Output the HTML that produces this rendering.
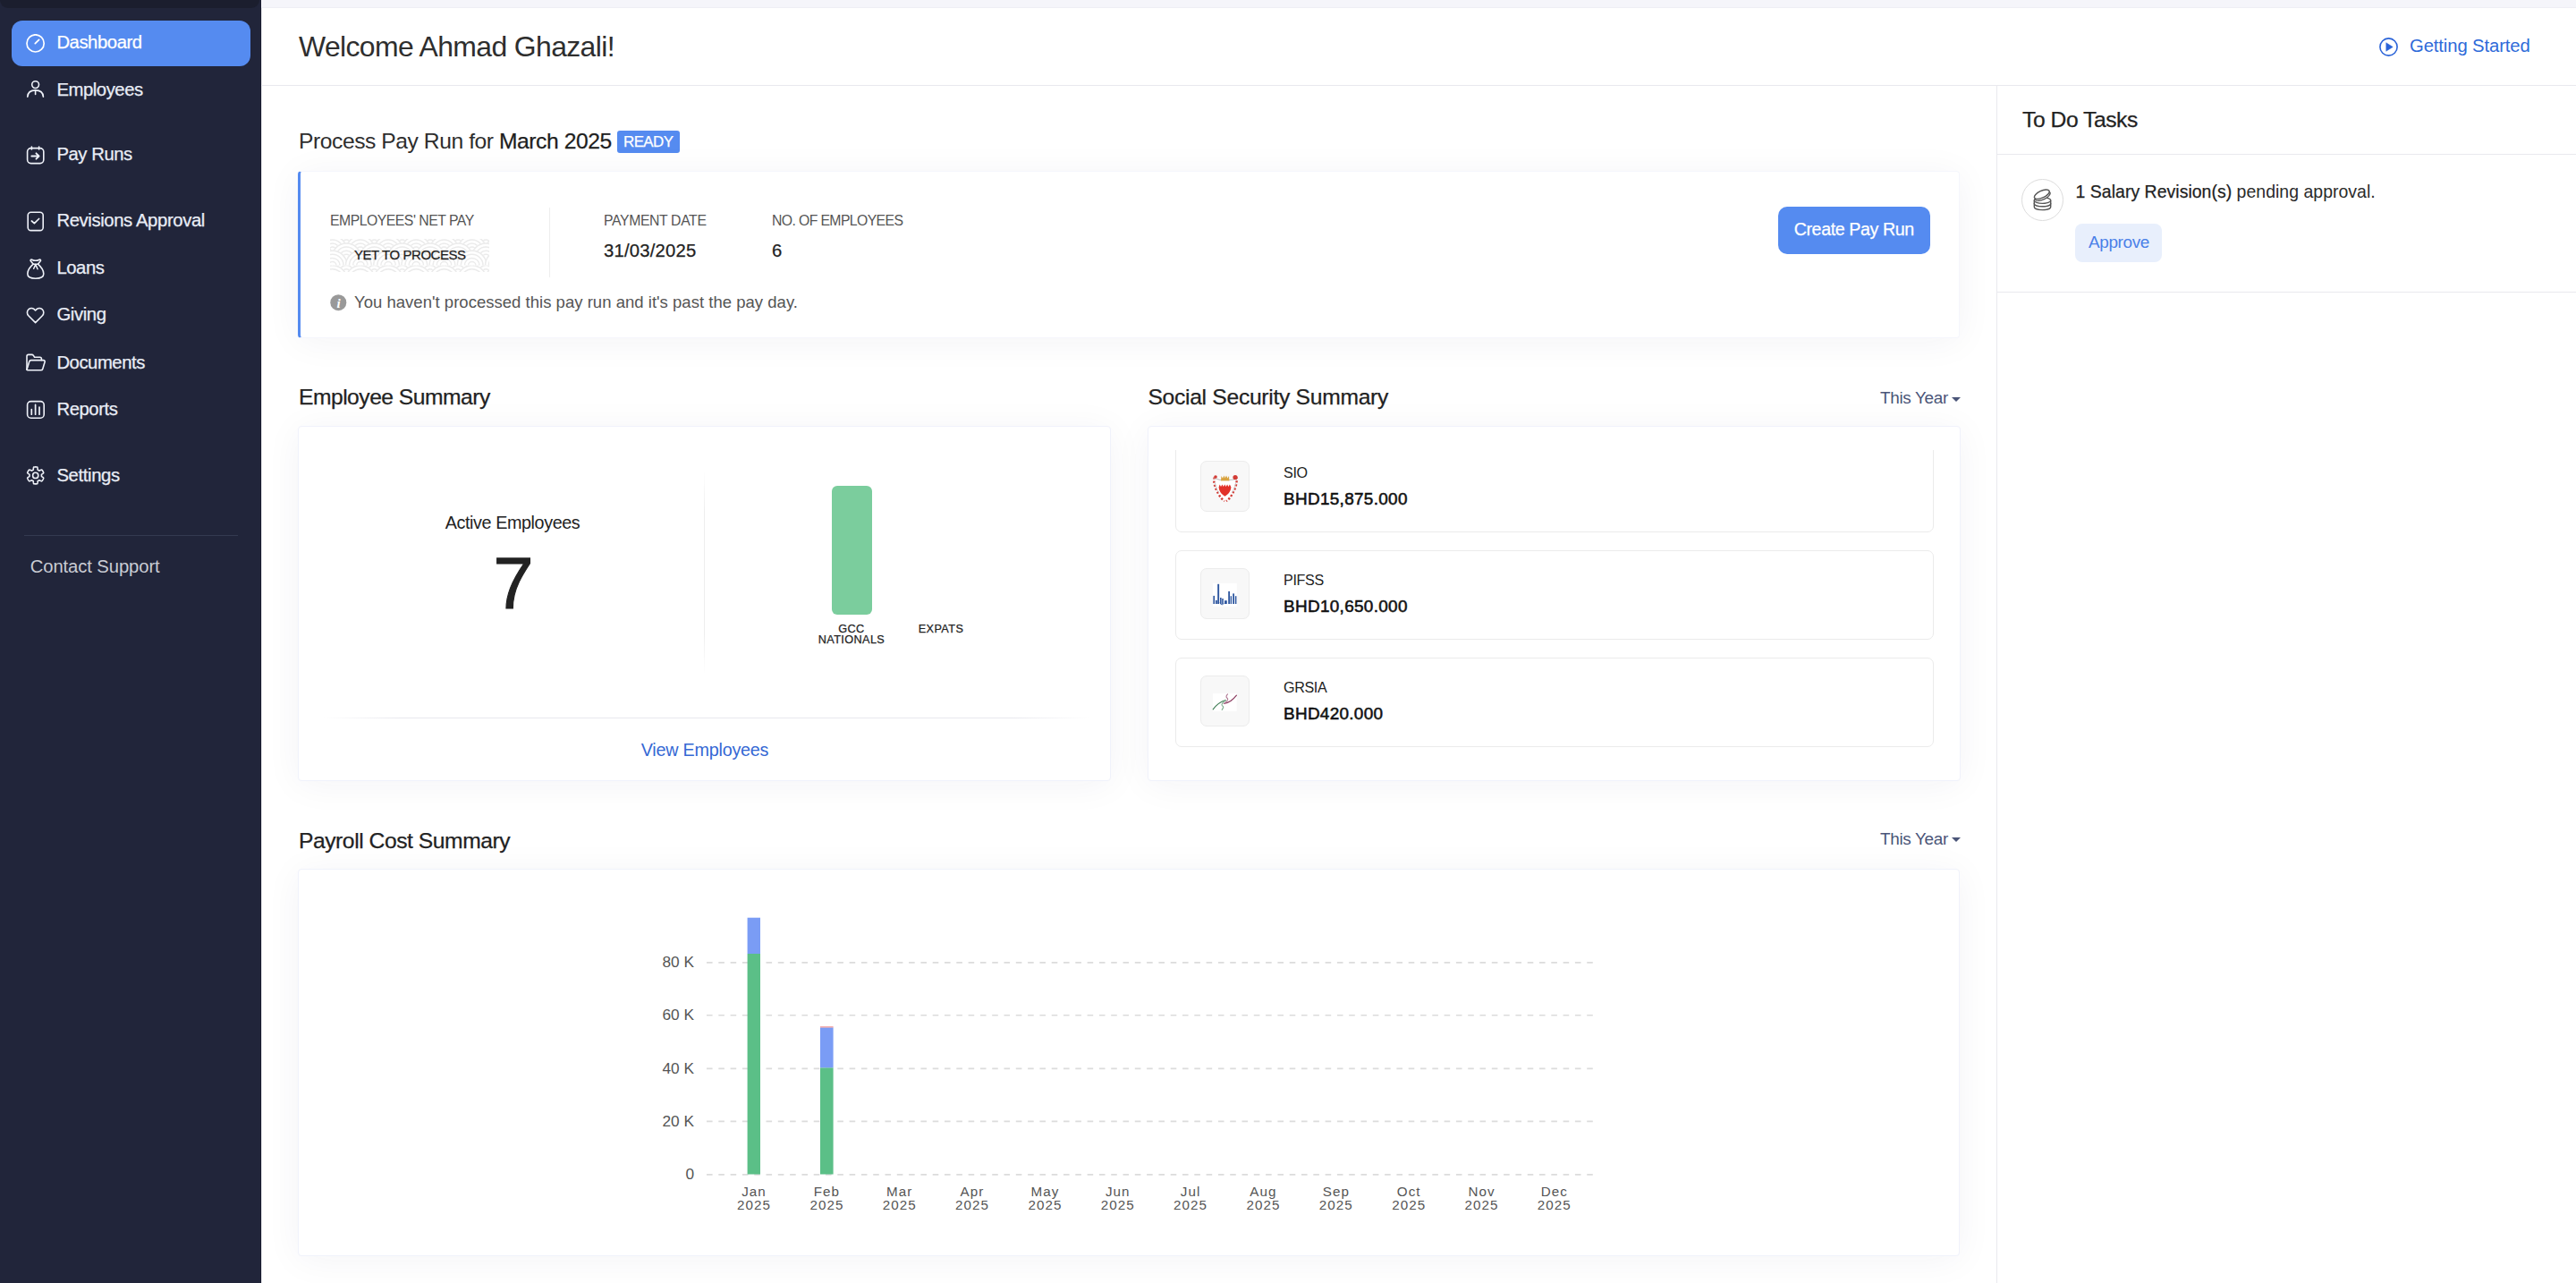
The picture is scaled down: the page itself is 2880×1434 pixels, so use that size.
<!DOCTYPE html>
<html><head><meta charset="utf-8"><title>Dashboard</title>
<style>
html,body{margin:0;padding:0;width:2880px;height:1434px;overflow:hidden;background:#fff;}
body{position:relative;font-family:"Liberation Sans",sans-serif;}
.a{position:absolute;}
.t{position:absolute;line-height:1;white-space:nowrap;}
.med{-webkit-text-stroke:0.25px currentColor;}
.semi{-webkit-text-stroke:0.55px currentColor;}
.bold{font-weight:700;}
</style></head><body>
<div class="a" style="left:0px;top:0px;width:292px;height:1434px;background:#21253a;"></div>
<div class="a" style="left:291px;top:0px;width:1px;height:1434px;background:#181b2e;"></div>
<div class="a" style="left:292px;top:0px;width:1px;height:1434px;background:#e4e4e8;"></div>
<div class="a" style="left:0px;top:0px;width:290px;height:9px;background:#1b1e2e;border-radius:0 0 9px 9px;"></div>
<div class="a" style="left:13px;top:23px;width:267px;height:51px;background:#558bf0;border-radius:12px;"></div>
<svg class="a" style="left:29px;top:38px" width="22" height="22" viewBox="0 0 22 22" fill="none" stroke="#ffffff" stroke-linecap="round" stroke-linejoin="round"><circle cx="10.6" cy="10.4" r="9.6" stroke-width="1.7"/><path d="M10.3 10.6 L14.6 6.4" stroke-width="1.8"/></svg>
<div class="t med" style="left:63.4px;top:37.4px;font-size:20.28px;color:#fff;letter-spacing:-0.435px">Dashboard</div>
<svg class="a" style="left:29px;top:88px" width="22" height="22" viewBox="0 0 22 22" fill="none" stroke="#eef1f8" stroke-linecap="round" stroke-linejoin="round"><circle cx="10.6" cy="6.6" r="3.9" stroke-width="1.6"/><path d="M1.8 20.2 C2 15.5 5.5 12.9 10.6 12.9 C15.7 12.9 19.2 15.5 19.4 20.2" stroke-width="1.6"/><path d="M10.6 13 V17.5" stroke-width="1.6"/></svg>
<div class="t med" style="left:63.4px;top:89.6px;font-size:20.28px;color:#e9edf6;letter-spacing:-0.440px">Employees</div>
<svg class="a" style="left:29px;top:162px" width="22" height="23" viewBox="0 0 22 23" fill="none" stroke="#eef1f8" stroke-linecap="round" stroke-linejoin="round"><rect x="1.6" y="3.6" width="18.2" height="17" rx="4" stroke-width="1.6"/><path d="M6.4 2 V5 M14.6 2 V5" stroke-width="1.6"/><path d="M6.3 12.5 H14.5 M11.4 9.3 L14.6 12.5 L11.4 15.7" stroke-width="1.8"/></svg>
<div class="t med" style="left:63.4px;top:162.4px;font-size:20.28px;color:#e9edf6;letter-spacing:-0.434px">Pay Runs</div>
<svg class="a" style="left:29px;top:235px" width="22" height="24" viewBox="0 0 22 24" fill="none" stroke="#eef1f8" stroke-linecap="round" stroke-linejoin="round"><rect x="2.2" y="2.2" width="17" height="20.4" rx="3.4" stroke-width="1.6"/><path d="M6.4 12 L9.4 14.6 L14.6 9.5" stroke-width="1.7"/></svg>
<div class="t med" style="left:63.4px;top:236.0px;font-size:20.28px;color:#e9edf6;letter-spacing:-0.378px">Revisions Approval</div>
<svg class="a" style="left:29px;top:288px" width="22" height="25" viewBox="0 0 22 25" fill="none" stroke="#eef1f8" stroke-linecap="round" stroke-linejoin="round"><path d="M8.2 7.2 C5 10 1.8 14 1.8 18 C1.8 21.5 5.5 23.2 10.8 23.2 C16.1 23.2 19.8 21.5 19.8 18 C19.8 14 16.6 10 13.4 7.2" stroke-width="1.6"/><path d="M8.2 7.2 L5.2 3.6 C4.8 2.6 5.6 1.8 6.6 2.2 C8 2.9 9.5 3.3 10.8 3.3 C12.1 3.3 13.6 2.9 15 2.2 C16 1.8 16.8 2.6 16.4 3.6 L13.4 7.2 Z" stroke-width="1.6"/><path d="M10.8 7.6 L8.7 12.2 M10.8 7.6 L13 12.8" stroke-width="1.5"/></svg>
<div class="t med" style="left:63.4px;top:289.4px;font-size:20.28px;color:#e9edf6;letter-spacing:-0.436px">Loans</div>
<svg class="a" style="left:29px;top:343px" width="22" height="20" viewBox="0 0 22 20" fill="none" stroke="#eef1f8" stroke-linecap="round" stroke-linejoin="round"><path d="M10.6 17.6 L3 10 C0.8 7.8 0.9 4.5 3.1 2.6 C5.2 0.9 8.3 1.2 10.6 4 C12.9 1.2 16 0.9 18.1 2.6 C20.3 4.5 20.4 7.8 18.2 10 Z" stroke-width="1.6"/></svg>
<div class="t med" style="left:63.4px;top:341.3px;font-size:20.28px;color:#e9edf6;letter-spacing:-0.378px">Giving</div>
<svg class="a" style="left:28px;top:394px" width="24" height="22" viewBox="0 0 24 22" fill="none" stroke="#eef1f8" stroke-linecap="round" stroke-linejoin="round"><path d="M2 19.2 V4.2 C2 3 2.8 2.4 3.8 2.4 H7.6 C8.4 2.4 9 2.8 9.4 3.4 L10.6 5.2 H16.6 C17.6 5.2 18.4 6 18.4 7 V8.6" stroke-width="1.6"/><path d="M2 19.2 L4.6 10.4 C4.9 9.4 5.6 8.6 6.8 8.6 H20.6 C21.8 8.6 22.4 9.6 22.1 10.6 L19.8 18.2 C19.5 19.2 18.8 19.8 17.8 19.8 H2.6" stroke-width="1.6"/></svg>
<div class="t med" style="left:63.4px;top:394.6px;font-size:20.28px;color:#e9edf6;letter-spacing:-0.450px">Documents</div>
<svg class="a" style="left:29px;top:447px" width="22" height="22" viewBox="0 0 22 22" fill="none" stroke="#eef1f8" stroke-linecap="round" stroke-linejoin="round"><rect x="1.6" y="1.6" width="18.6" height="18.6" rx="4" stroke-width="1.6"/><path d="M6.3 10.6 V16.2 M10.6 5.4 V16.2 M15 8 V16.2" stroke-width="1.7"/></svg>
<div class="t med" style="left:63.4px;top:446.8px;font-size:20.28px;color:#e9edf6;letter-spacing:-0.400px">Reports</div>
<svg class="a" style="left:28px;top:520px" width="24" height="24" viewBox="0 0 24 24" fill="none" stroke="#eef1f8" stroke-linecap="round" stroke-linejoin="round"><path d="M18.40 11.40 L18.39 11.69 L18.37 11.98 L18.34 12.27 L18.71 12.64 L19.44 13.12 L20.20 13.68 L20.76 14.26 L20.63 14.65 L20.48 15.04 L20.31 15.41 L20.13 15.79 L19.93 16.15 L19.71 16.50 L19.48 16.85 L19.24 17.18 L18.98 17.51 L18.70 17.82 L17.92 17.62 L17.06 17.25 L16.28 16.85 L15.78 16.72 L15.54 16.89 L15.30 17.05 L15.05 17.20 L14.79 17.34 L14.53 17.47 L14.26 17.59 L14.14 18.09 L14.08 18.96 L13.98 19.90 L13.76 20.67 L13.35 20.76 L12.94 20.82 L12.53 20.86 L12.11 20.89 L11.70 20.90 L11.29 20.89 L10.87 20.86 L10.46 20.82 L10.05 20.76 L9.64 20.67 L9.42 19.90 L9.32 18.96 L9.26 18.09 L9.14 17.59 L8.87 17.47 L8.61 17.34 L8.35 17.20 L8.10 17.05 L7.86 16.89 L7.62 16.72 L7.12 16.85 L6.34 17.25 L5.48 17.62 L4.70 17.82 L4.42 17.51 L4.16 17.18 L3.92 16.85 L3.69 16.50 L3.47 16.15 L3.27 15.79 L3.09 15.41 L2.92 15.04 L2.77 14.65 L2.64 14.26 L3.20 13.68 L3.96 13.12 L4.69 12.64 L5.06 12.27 L5.03 11.98 L5.01 11.69 L5.00 11.40 L5.01 11.11 L5.03 10.82 L5.06 10.53 L4.69 10.16 L3.96 9.68 L3.20 9.12 L2.64 8.54 L2.77 8.15 L2.92 7.76 L3.09 7.39 L3.27 7.01 L3.47 6.65 L3.69 6.30 L3.92 5.95 L4.16 5.62 L4.42 5.29 L4.70 4.98 L5.48 5.18 L6.34 5.55 L7.12 5.95 L7.62 6.08 L7.86 5.91 L8.10 5.75 L8.35 5.60 L8.61 5.46 L8.87 5.33 L9.14 5.21 L9.26 4.71 L9.32 3.84 L9.42 2.90 L9.64 2.13 L10.05 2.04 L10.46 1.98 L10.87 1.94 L11.29 1.91 L11.70 1.90 L12.11 1.91 L12.53 1.94 L12.94 1.98 L13.35 2.04 L13.76 2.13 L13.98 2.90 L14.08 3.84 L14.14 4.71 L14.26 5.21 L14.53 5.33 L14.79 5.46 L15.05 5.60 L15.30 5.75 L15.54 5.91 L15.78 6.08 L16.28 5.95 L17.06 5.55 L17.92 5.18 L18.70 4.98 L18.98 5.29 L19.24 5.62 L19.48 5.95 L19.71 6.30 L19.93 6.65 L20.13 7.01 L20.31 7.39 L20.48 7.76 L20.63 8.15 L20.76 8.54 L20.20 9.12 L19.44 9.68 L18.71 10.16 L18.34 10.53 L18.37 10.82 L18.39 11.11 Z" stroke-width="1.6"/><circle cx="11.7" cy="11.4" r="3.1" stroke-width="1.6"/></svg>
<div class="t med" style="left:63.4px;top:520.6px;font-size:20.28px;color:#e9edf6;letter-spacing:-0.362px">Settings</div>
<div class="a" style="left:27px;top:598px;width:239px;height:1px;background:#343a50;"></div>
<div class="t " style="left:33.7px;top:623.4px;font-size:20.28px;color:#c9ccd4;letter-spacing:-0.106px">Contact Support</div>
<div class="a" style="left:292px;top:0px;width:2588px;height:8px;background:#f5f5fa;"></div>
<div class="a" style="left:292px;top:8px;width:2588px;height:1px;background:#eeeef4;"></div>
<div class="t " style="left:334.0px;top:37.2px;font-size:31.93px;color:#2e2e2e;letter-spacing:-0.626px">Welcome Ahmad Ghazali!</div>
<svg class="a" style="left:2659px;top:41px" width="23" height="23" viewBox="0 0 23 23" fill="none" stroke="#2a63d8" stroke-linecap="round" stroke-linejoin="round"><circle cx="11.5" cy="11.5" r="9.6" stroke-width="1.6"/><path d="M9 7 L16.2 11.5 L9 16 Z" fill="#2a63d8" stroke-width="0.6"/></svg>
<div class="t " style="left:2694.0px;top:41.4px;font-size:20.28px;color:#2e6ad9;letter-spacing:-0.109px">Getting Started</div>
<div class="a" style="left:292px;top:95px;width:2588px;height:1px;background:#e9e9ee;"></div>
<div class="a" style="left:2232px;top:96px;width:1px;height:1338px;background:#e9e9ee;"></div>
<div class="t med" style="left:2261.0px;top:122.4px;font-size:24.65px;color:#222;letter-spacing:-0.444px">To Do Tasks</div>
<div class="a" style="left:2233px;top:172px;width:647px;height:1px;background:#e9e9ee;"></div>
<div class="a" style="left:2260px;top:200px;width:47px;height:47px;border:1.3px solid #dcdcdc;border-radius:50%;box-sizing:border-box;"></div>
<svg class="a" style="left:2268px;top:206px" width="30" height="32" viewBox="0 0 30 32" fill="none" stroke="#555" stroke-linecap="round" stroke-linejoin="round"><ellipse cx="15.5" cy="18" rx="9.2" ry="3.4" stroke-width="1.4"/><path d="M6.3 18 V25.3 C6.3 27.2 10.4 28.6 15.5 28.6 C20.6 28.6 24.7 27.2 24.7 25.3 V18" stroke-width="1.4"/><path d="M6.3 21.5 C6.3 23.4 10.4 24.8 15.5 24.8 C20.6 24.8 24.7 23.4 24.7 21.5" stroke-width="1.4"/><g transform="rotate(-25 14.8 11.2)"><ellipse cx="14.8" cy="13.3" rx="9.1" ry="3.9" fill="#fff" stroke-width="1.4"/><ellipse cx="14.8" cy="11.2" rx="9.1" ry="3.9" fill="#fff" stroke-width="1.4"/></g></svg>
<div class="t " style="left:2320.6px;top:204.8px;font-size:19.45px;color:#2b2b2b;letter-spacing:0.034px"><span class="med" style="color:#1f1f1f">1 Salary Revision(s)</span> pending approval.</div>
<div class="a" style="left:2320px;top:250px;width:97px;height:43px;background:#e8effc;border-radius:8px;"></div>
<div class="t " style="left:2335.0px;top:261.5px;font-size:18.93px;color:#4a80e8;letter-spacing:-0.372px">Approve</div>
<div class="a" style="left:2233px;top:326px;width:647px;height:1px;background:#e9e9ee;"></div>
<div class="t " style="left:334.0px;top:145.6px;font-size:24.65px;color:#2e2e2e;letter-spacing:-0.442px">Process Pay Run for <span class="med" style="color:#1e1e1e">March 2025</span></div>
<div class="a" style="left:690px;top:146px;width:70px;height:25px;background:#558bf0;border-radius:3px;"></div>
<div class="t med" style="left:697.0px;top:151.0px;font-size:16.95px;color:#fff;letter-spacing:-0.582px">READY</div>
<div class="a" style="left:333px;top:191px;width:1858px;height:187px;background:#fff;border-radius:4px;box-shadow:0 4px 40px rgba(30,30,70,0.05);border:1px solid #f5f6fc;border-left:3px solid #558bf0;box-sizing:border-box;"></div>
<div class="t " style="left:369.0px;top:239.0px;font-size:15.81px;color:#555;letter-spacing:-0.508px">EMPLOYEES' NET PAY</div>
<svg class="a" style="left:369px;top:267px" width="178" height="37"><g stroke="#ebebeb" stroke-width="1.5"><svg x="0" y="-3.1" width="178" height="32.8" overflow="hidden"><circle cx="-28.5" cy="0" r="17.1" fill="#fff" stroke="none"/><circle cx="-28.5" cy="0" r="16.4" fill="none"/><circle cx="-28.5" cy="0" r="12.4" fill="none"/><circle cx="-28.5" cy="0" r="8.3" fill="none"/><circle cx="-28.5" cy="0" r="4.2" fill="none"/><circle cx="2.7" cy="0" r="17.1" fill="#fff" stroke="none"/><circle cx="2.7" cy="0" r="16.4" fill="none"/><circle cx="2.7" cy="0" r="12.4" fill="none"/><circle cx="2.7" cy="0" r="8.3" fill="none"/><circle cx="2.7" cy="0" r="4.2" fill="none"/><circle cx="33.9" cy="0" r="17.1" fill="#fff" stroke="none"/><circle cx="33.9" cy="0" r="16.4" fill="none"/><circle cx="33.9" cy="0" r="12.4" fill="none"/><circle cx="33.9" cy="0" r="8.3" fill="none"/><circle cx="33.9" cy="0" r="4.2" fill="none"/><circle cx="65.1" cy="0" r="17.1" fill="#fff" stroke="none"/><circle cx="65.1" cy="0" r="16.4" fill="none"/><circle cx="65.1" cy="0" r="12.4" fill="none"/><circle cx="65.1" cy="0" r="8.3" fill="none"/><circle cx="65.1" cy="0" r="4.2" fill="none"/><circle cx="96.3" cy="0" r="17.1" fill="#fff" stroke="none"/><circle cx="96.3" cy="0" r="16.4" fill="none"/><circle cx="96.3" cy="0" r="12.4" fill="none"/><circle cx="96.3" cy="0" r="8.3" fill="none"/><circle cx="96.3" cy="0" r="4.2" fill="none"/><circle cx="127.5" cy="0" r="17.1" fill="#fff" stroke="none"/><circle cx="127.5" cy="0" r="16.4" fill="none"/><circle cx="127.5" cy="0" r="12.4" fill="none"/><circle cx="127.5" cy="0" r="8.3" fill="none"/><circle cx="127.5" cy="0" r="4.2" fill="none"/><circle cx="158.7" cy="0" r="17.1" fill="#fff" stroke="none"/><circle cx="158.7" cy="0" r="16.4" fill="none"/><circle cx="158.7" cy="0" r="12.4" fill="none"/><circle cx="158.7" cy="0" r="8.3" fill="none"/><circle cx="158.7" cy="0" r="4.2" fill="none"/><circle cx="189.9" cy="0" r="17.1" fill="#fff" stroke="none"/><circle cx="189.9" cy="0" r="16.4" fill="none"/><circle cx="189.9" cy="0" r="12.4" fill="none"/><circle cx="189.9" cy="0" r="8.3" fill="none"/><circle cx="189.9" cy="0" r="4.2" fill="none"/><circle cx="-12.9" cy="8.2" r="17.1" fill="#fff" stroke="none"/><circle cx="-12.9" cy="8.2" r="16.4" fill="none"/><circle cx="-12.9" cy="8.2" r="12.4" fill="none"/><circle cx="-12.9" cy="8.2" r="8.3" fill="none"/><circle cx="-12.9" cy="8.2" r="4.2" fill="none"/><circle cx="18.3" cy="8.2" r="17.1" fill="#fff" stroke="none"/><circle cx="18.3" cy="8.2" r="16.4" fill="none"/><circle cx="18.3" cy="8.2" r="12.4" fill="none"/><circle cx="18.3" cy="8.2" r="8.3" fill="none"/><circle cx="18.3" cy="8.2" r="4.2" fill="none"/><circle cx="49.5" cy="8.2" r="17.1" fill="#fff" stroke="none"/><circle cx="49.5" cy="8.2" r="16.4" fill="none"/><circle cx="49.5" cy="8.2" r="12.4" fill="none"/><circle cx="49.5" cy="8.2" r="8.3" fill="none"/><circle cx="49.5" cy="8.2" r="4.2" fill="none"/><circle cx="80.7" cy="8.2" r="17.1" fill="#fff" stroke="none"/><circle cx="80.7" cy="8.2" r="16.4" fill="none"/><circle cx="80.7" cy="8.2" r="12.4" fill="none"/><circle cx="80.7" cy="8.2" r="8.3" fill="none"/><circle cx="80.7" cy="8.2" r="4.2" fill="none"/><circle cx="111.9" cy="8.2" r="17.1" fill="#fff" stroke="none"/><circle cx="111.9" cy="8.2" r="16.4" fill="none"/><circle cx="111.9" cy="8.2" r="12.4" fill="none"/><circle cx="111.9" cy="8.2" r="8.3" fill="none"/><circle cx="111.9" cy="8.2" r="4.2" fill="none"/><circle cx="143.1" cy="8.2" r="17.1" fill="#fff" stroke="none"/><circle cx="143.1" cy="8.2" r="16.4" fill="none"/><circle cx="143.1" cy="8.2" r="12.4" fill="none"/><circle cx="143.1" cy="8.2" r="8.3" fill="none"/><circle cx="143.1" cy="8.2" r="4.2" fill="none"/><circle cx="174.3" cy="8.2" r="17.1" fill="#fff" stroke="none"/><circle cx="174.3" cy="8.2" r="16.4" fill="none"/><circle cx="174.3" cy="8.2" r="12.4" fill="none"/><circle cx="174.3" cy="8.2" r="8.3" fill="none"/><circle cx="174.3" cy="8.2" r="4.2" fill="none"/><circle cx="205.5" cy="8.2" r="17.1" fill="#fff" stroke="none"/><circle cx="205.5" cy="8.2" r="16.4" fill="none"/><circle cx="205.5" cy="8.2" r="12.4" fill="none"/><circle cx="205.5" cy="8.2" r="8.3" fill="none"/><circle cx="205.5" cy="8.2" r="4.2" fill="none"/><circle cx="-28.5" cy="16.4" r="17.1" fill="#fff" stroke="none"/><circle cx="-28.5" cy="16.4" r="16.4" fill="none"/><circle cx="-28.5" cy="16.4" r="12.4" fill="none"/><circle cx="-28.5" cy="16.4" r="8.3" fill="none"/><circle cx="-28.5" cy="16.4" r="4.2" fill="none"/><circle cx="2.7" cy="16.4" r="17.1" fill="#fff" stroke="none"/><circle cx="2.7" cy="16.4" r="16.4" fill="none"/><circle cx="2.7" cy="16.4" r="12.4" fill="none"/><circle cx="2.7" cy="16.4" r="8.3" fill="none"/><circle cx="2.7" cy="16.4" r="4.2" fill="none"/><circle cx="33.9" cy="16.4" r="17.1" fill="#fff" stroke="none"/><circle cx="33.9" cy="16.4" r="16.4" fill="none"/><circle cx="33.9" cy="16.4" r="12.4" fill="none"/><circle cx="33.9" cy="16.4" r="8.3" fill="none"/><circle cx="33.9" cy="16.4" r="4.2" fill="none"/><circle cx="65.1" cy="16.4" r="17.1" fill="#fff" stroke="none"/><circle cx="65.1" cy="16.4" r="16.4" fill="none"/><circle cx="65.1" cy="16.4" r="12.4" fill="none"/><circle cx="65.1" cy="16.4" r="8.3" fill="none"/><circle cx="65.1" cy="16.4" r="4.2" fill="none"/><circle cx="96.3" cy="16.4" r="17.1" fill="#fff" stroke="none"/><circle cx="96.3" cy="16.4" r="16.4" fill="none"/><circle cx="96.3" cy="16.4" r="12.4" fill="none"/><circle cx="96.3" cy="16.4" r="8.3" fill="none"/><circle cx="96.3" cy="16.4" r="4.2" fill="none"/><circle cx="127.5" cy="16.4" r="17.1" fill="#fff" stroke="none"/><circle cx="127.5" cy="16.4" r="16.4" fill="none"/><circle cx="127.5" cy="16.4" r="12.4" fill="none"/><circle cx="127.5" cy="16.4" r="8.3" fill="none"/><circle cx="127.5" cy="16.4" r="4.2" fill="none"/><circle cx="158.7" cy="16.4" r="17.1" fill="#fff" stroke="none"/><circle cx="158.7" cy="16.4" r="16.4" fill="none"/><circle cx="158.7" cy="16.4" r="12.4" fill="none"/><circle cx="158.7" cy="16.4" r="8.3" fill="none"/><circle cx="158.7" cy="16.4" r="4.2" fill="none"/><circle cx="189.9" cy="16.4" r="17.1" fill="#fff" stroke="none"/><circle cx="189.9" cy="16.4" r="16.4" fill="none"/><circle cx="189.9" cy="16.4" r="12.4" fill="none"/><circle cx="189.9" cy="16.4" r="8.3" fill="none"/><circle cx="189.9" cy="16.4" r="4.2" fill="none"/><circle cx="-12.9" cy="24.6" r="17.1" fill="#fff" stroke="none"/><circle cx="-12.9" cy="24.6" r="16.4" fill="none"/><circle cx="-12.9" cy="24.6" r="12.4" fill="none"/><circle cx="-12.9" cy="24.6" r="8.3" fill="none"/><circle cx="-12.9" cy="24.6" r="4.2" fill="none"/><circle cx="18.3" cy="24.6" r="17.1" fill="#fff" stroke="none"/><circle cx="18.3" cy="24.6" r="16.4" fill="none"/><circle cx="18.3" cy="24.6" r="12.4" fill="none"/><circle cx="18.3" cy="24.6" r="8.3" fill="none"/><circle cx="18.3" cy="24.6" r="4.2" fill="none"/><circle cx="49.5" cy="24.6" r="17.1" fill="#fff" stroke="none"/><circle cx="49.5" cy="24.6" r="16.4" fill="none"/><circle cx="49.5" cy="24.6" r="12.4" fill="none"/><circle cx="49.5" cy="24.6" r="8.3" fill="none"/><circle cx="49.5" cy="24.6" r="4.2" fill="none"/><circle cx="80.7" cy="24.6" r="17.1" fill="#fff" stroke="none"/><circle cx="80.7" cy="24.6" r="16.4" fill="none"/><circle cx="80.7" cy="24.6" r="12.4" fill="none"/><circle cx="80.7" cy="24.6" r="8.3" fill="none"/><circle cx="80.7" cy="24.6" r="4.2" fill="none"/><circle cx="111.9" cy="24.6" r="17.1" fill="#fff" stroke="none"/><circle cx="111.9" cy="24.6" r="16.4" fill="none"/><circle cx="111.9" cy="24.6" r="12.4" fill="none"/><circle cx="111.9" cy="24.6" r="8.3" fill="none"/><circle cx="111.9" cy="24.6" r="4.2" fill="none"/><circle cx="143.1" cy="24.6" r="17.1" fill="#fff" stroke="none"/><circle cx="143.1" cy="24.6" r="16.4" fill="none"/><circle cx="143.1" cy="24.6" r="12.4" fill="none"/><circle cx="143.1" cy="24.6" r="8.3" fill="none"/><circle cx="143.1" cy="24.6" r="4.2" fill="none"/><circle cx="174.3" cy="24.6" r="17.1" fill="#fff" stroke="none"/><circle cx="174.3" cy="24.6" r="16.4" fill="none"/><circle cx="174.3" cy="24.6" r="12.4" fill="none"/><circle cx="174.3" cy="24.6" r="8.3" fill="none"/><circle cx="174.3" cy="24.6" r="4.2" fill="none"/><circle cx="205.5" cy="24.6" r="17.1" fill="#fff" stroke="none"/><circle cx="205.5" cy="24.6" r="16.4" fill="none"/><circle cx="205.5" cy="24.6" r="12.4" fill="none"/><circle cx="205.5" cy="24.6" r="8.3" fill="none"/><circle cx="205.5" cy="24.6" r="4.2" fill="none"/><circle cx="-28.5" cy="32.8" r="17.1" fill="#fff" stroke="none"/><circle cx="-28.5" cy="32.8" r="16.4" fill="none"/><circle cx="-28.5" cy="32.8" r="12.4" fill="none"/><circle cx="-28.5" cy="32.8" r="8.3" fill="none"/><circle cx="-28.5" cy="32.8" r="4.2" fill="none"/><circle cx="2.7" cy="32.8" r="17.1" fill="#fff" stroke="none"/><circle cx="2.7" cy="32.8" r="16.4" fill="none"/><circle cx="2.7" cy="32.8" r="12.4" fill="none"/><circle cx="2.7" cy="32.8" r="8.3" fill="none"/><circle cx="2.7" cy="32.8" r="4.2" fill="none"/><circle cx="33.9" cy="32.8" r="17.1" fill="#fff" stroke="none"/><circle cx="33.9" cy="32.8" r="16.4" fill="none"/><circle cx="33.9" cy="32.8" r="12.4" fill="none"/><circle cx="33.9" cy="32.8" r="8.3" fill="none"/><circle cx="33.9" cy="32.8" r="4.2" fill="none"/><circle cx="65.1" cy="32.8" r="17.1" fill="#fff" stroke="none"/><circle cx="65.1" cy="32.8" r="16.4" fill="none"/><circle cx="65.1" cy="32.8" r="12.4" fill="none"/><circle cx="65.1" cy="32.8" r="8.3" fill="none"/><circle cx="65.1" cy="32.8" r="4.2" fill="none"/><circle cx="96.3" cy="32.8" r="17.1" fill="#fff" stroke="none"/><circle cx="96.3" cy="32.8" r="16.4" fill="none"/><circle cx="96.3" cy="32.8" r="12.4" fill="none"/><circle cx="96.3" cy="32.8" r="8.3" fill="none"/><circle cx="96.3" cy="32.8" r="4.2" fill="none"/><circle cx="127.5" cy="32.8" r="17.1" fill="#fff" stroke="none"/><circle cx="127.5" cy="32.8" r="16.4" fill="none"/><circle cx="127.5" cy="32.8" r="12.4" fill="none"/><circle cx="127.5" cy="32.8" r="8.3" fill="none"/><circle cx="127.5" cy="32.8" r="4.2" fill="none"/><circle cx="158.7" cy="32.8" r="17.1" fill="#fff" stroke="none"/><circle cx="158.7" cy="32.8" r="16.4" fill="none"/><circle cx="158.7" cy="32.8" r="12.4" fill="none"/><circle cx="158.7" cy="32.8" r="8.3" fill="none"/><circle cx="158.7" cy="32.8" r="4.2" fill="none"/><circle cx="189.9" cy="32.8" r="17.1" fill="#fff" stroke="none"/><circle cx="189.9" cy="32.8" r="16.4" fill="none"/><circle cx="189.9" cy="32.8" r="12.4" fill="none"/><circle cx="189.9" cy="32.8" r="8.3" fill="none"/><circle cx="189.9" cy="32.8" r="4.2" fill="none"/></svg><svg x="0" y="29.7" width="178" height="32.8" overflow="hidden"><circle cx="-28.5" cy="0" r="17.1" fill="#fff" stroke="none"/><circle cx="-28.5" cy="0" r="16.4" fill="none"/><circle cx="-28.5" cy="0" r="12.4" fill="none"/><circle cx="-28.5" cy="0" r="8.3" fill="none"/><circle cx="-28.5" cy="0" r="4.2" fill="none"/><circle cx="2.7" cy="0" r="17.1" fill="#fff" stroke="none"/><circle cx="2.7" cy="0" r="16.4" fill="none"/><circle cx="2.7" cy="0" r="12.4" fill="none"/><circle cx="2.7" cy="0" r="8.3" fill="none"/><circle cx="2.7" cy="0" r="4.2" fill="none"/><circle cx="33.9" cy="0" r="17.1" fill="#fff" stroke="none"/><circle cx="33.9" cy="0" r="16.4" fill="none"/><circle cx="33.9" cy="0" r="12.4" fill="none"/><circle cx="33.9" cy="0" r="8.3" fill="none"/><circle cx="33.9" cy="0" r="4.2" fill="none"/><circle cx="65.1" cy="0" r="17.1" fill="#fff" stroke="none"/><circle cx="65.1" cy="0" r="16.4" fill="none"/><circle cx="65.1" cy="0" r="12.4" fill="none"/><circle cx="65.1" cy="0" r="8.3" fill="none"/><circle cx="65.1" cy="0" r="4.2" fill="none"/><circle cx="96.3" cy="0" r="17.1" fill="#fff" stroke="none"/><circle cx="96.3" cy="0" r="16.4" fill="none"/><circle cx="96.3" cy="0" r="12.4" fill="none"/><circle cx="96.3" cy="0" r="8.3" fill="none"/><circle cx="96.3" cy="0" r="4.2" fill="none"/><circle cx="127.5" cy="0" r="17.1" fill="#fff" stroke="none"/><circle cx="127.5" cy="0" r="16.4" fill="none"/><circle cx="127.5" cy="0" r="12.4" fill="none"/><circle cx="127.5" cy="0" r="8.3" fill="none"/><circle cx="127.5" cy="0" r="4.2" fill="none"/><circle cx="158.7" cy="0" r="17.1" fill="#fff" stroke="none"/><circle cx="158.7" cy="0" r="16.4" fill="none"/><circle cx="158.7" cy="0" r="12.4" fill="none"/><circle cx="158.7" cy="0" r="8.3" fill="none"/><circle cx="158.7" cy="0" r="4.2" fill="none"/><circle cx="189.9" cy="0" r="17.1" fill="#fff" stroke="none"/><circle cx="189.9" cy="0" r="16.4" fill="none"/><circle cx="189.9" cy="0" r="12.4" fill="none"/><circle cx="189.9" cy="0" r="8.3" fill="none"/><circle cx="189.9" cy="0" r="4.2" fill="none"/><circle cx="-12.9" cy="8.2" r="17.1" fill="#fff" stroke="none"/><circle cx="-12.9" cy="8.2" r="16.4" fill="none"/><circle cx="-12.9" cy="8.2" r="12.4" fill="none"/><circle cx="-12.9" cy="8.2" r="8.3" fill="none"/><circle cx="-12.9" cy="8.2" r="4.2" fill="none"/><circle cx="18.3" cy="8.2" r="17.1" fill="#fff" stroke="none"/><circle cx="18.3" cy="8.2" r="16.4" fill="none"/><circle cx="18.3" cy="8.2" r="12.4" fill="none"/><circle cx="18.3" cy="8.2" r="8.3" fill="none"/><circle cx="18.3" cy="8.2" r="4.2" fill="none"/><circle cx="49.5" cy="8.2" r="17.1" fill="#fff" stroke="none"/><circle cx="49.5" cy="8.2" r="16.4" fill="none"/><circle cx="49.5" cy="8.2" r="12.4" fill="none"/><circle cx="49.5" cy="8.2" r="8.3" fill="none"/><circle cx="49.5" cy="8.2" r="4.2" fill="none"/><circle cx="80.7" cy="8.2" r="17.1" fill="#fff" stroke="none"/><circle cx="80.7" cy="8.2" r="16.4" fill="none"/><circle cx="80.7" cy="8.2" r="12.4" fill="none"/><circle cx="80.7" cy="8.2" r="8.3" fill="none"/><circle cx="80.7" cy="8.2" r="4.2" fill="none"/><circle cx="111.9" cy="8.2" r="17.1" fill="#fff" stroke="none"/><circle cx="111.9" cy="8.2" r="16.4" fill="none"/><circle cx="111.9" cy="8.2" r="12.4" fill="none"/><circle cx="111.9" cy="8.2" r="8.3" fill="none"/><circle cx="111.9" cy="8.2" r="4.2" fill="none"/><circle cx="143.1" cy="8.2" r="17.1" fill="#fff" stroke="none"/><circle cx="143.1" cy="8.2" r="16.4" fill="none"/><circle cx="143.1" cy="8.2" r="12.4" fill="none"/><circle cx="143.1" cy="8.2" r="8.3" fill="none"/><circle cx="143.1" cy="8.2" r="4.2" fill="none"/><circle cx="174.3" cy="8.2" r="17.1" fill="#fff" stroke="none"/><circle cx="174.3" cy="8.2" r="16.4" fill="none"/><circle cx="174.3" cy="8.2" r="12.4" fill="none"/><circle cx="174.3" cy="8.2" r="8.3" fill="none"/><circle cx="174.3" cy="8.2" r="4.2" fill="none"/><circle cx="205.5" cy="8.2" r="17.1" fill="#fff" stroke="none"/><circle cx="205.5" cy="8.2" r="16.4" fill="none"/><circle cx="205.5" cy="8.2" r="12.4" fill="none"/><circle cx="205.5" cy="8.2" r="8.3" fill="none"/><circle cx="205.5" cy="8.2" r="4.2" fill="none"/><circle cx="-28.5" cy="16.4" r="17.1" fill="#fff" stroke="none"/><circle cx="-28.5" cy="16.4" r="16.4" fill="none"/><circle cx="-28.5" cy="16.4" r="12.4" fill="none"/><circle cx="-28.5" cy="16.4" r="8.3" fill="none"/><circle cx="-28.5" cy="16.4" r="4.2" fill="none"/><circle cx="2.7" cy="16.4" r="17.1" fill="#fff" stroke="none"/><circle cx="2.7" cy="16.4" r="16.4" fill="none"/><circle cx="2.7" cy="16.4" r="12.4" fill="none"/><circle cx="2.7" cy="16.4" r="8.3" fill="none"/><circle cx="2.7" cy="16.4" r="4.2" fill="none"/><circle cx="33.9" cy="16.4" r="17.1" fill="#fff" stroke="none"/><circle cx="33.9" cy="16.4" r="16.4" fill="none"/><circle cx="33.9" cy="16.4" r="12.4" fill="none"/><circle cx="33.9" cy="16.4" r="8.3" fill="none"/><circle cx="33.9" cy="16.4" r="4.2" fill="none"/><circle cx="65.1" cy="16.4" r="17.1" fill="#fff" stroke="none"/><circle cx="65.1" cy="16.4" r="16.4" fill="none"/><circle cx="65.1" cy="16.4" r="12.4" fill="none"/><circle cx="65.1" cy="16.4" r="8.3" fill="none"/><circle cx="65.1" cy="16.4" r="4.2" fill="none"/><circle cx="96.3" cy="16.4" r="17.1" fill="#fff" stroke="none"/><circle cx="96.3" cy="16.4" r="16.4" fill="none"/><circle cx="96.3" cy="16.4" r="12.4" fill="none"/><circle cx="96.3" cy="16.4" r="8.3" fill="none"/><circle cx="96.3" cy="16.4" r="4.2" fill="none"/><circle cx="127.5" cy="16.4" r="17.1" fill="#fff" stroke="none"/><circle cx="127.5" cy="16.4" r="16.4" fill="none"/><circle cx="127.5" cy="16.4" r="12.4" fill="none"/><circle cx="127.5" cy="16.4" r="8.3" fill="none"/><circle cx="127.5" cy="16.4" r="4.2" fill="none"/><circle cx="158.7" cy="16.4" r="17.1" fill="#fff" stroke="none"/><circle cx="158.7" cy="16.4" r="16.4" fill="none"/><circle cx="158.7" cy="16.4" r="12.4" fill="none"/><circle cx="158.7" cy="16.4" r="8.3" fill="none"/><circle cx="158.7" cy="16.4" r="4.2" fill="none"/><circle cx="189.9" cy="16.4" r="17.1" fill="#fff" stroke="none"/><circle cx="189.9" cy="16.4" r="16.4" fill="none"/><circle cx="189.9" cy="16.4" r="12.4" fill="none"/><circle cx="189.9" cy="16.4" r="8.3" fill="none"/><circle cx="189.9" cy="16.4" r="4.2" fill="none"/><circle cx="-12.9" cy="24.6" r="17.1" fill="#fff" stroke="none"/><circle cx="-12.9" cy="24.6" r="16.4" fill="none"/><circle cx="-12.9" cy="24.6" r="12.4" fill="none"/><circle cx="-12.9" cy="24.6" r="8.3" fill="none"/><circle cx="-12.9" cy="24.6" r="4.2" fill="none"/><circle cx="18.3" cy="24.6" r="17.1" fill="#fff" stroke="none"/><circle cx="18.3" cy="24.6" r="16.4" fill="none"/><circle cx="18.3" cy="24.6" r="12.4" fill="none"/><circle cx="18.3" cy="24.6" r="8.3" fill="none"/><circle cx="18.3" cy="24.6" r="4.2" fill="none"/><circle cx="49.5" cy="24.6" r="17.1" fill="#fff" stroke="none"/><circle cx="49.5" cy="24.6" r="16.4" fill="none"/><circle cx="49.5" cy="24.6" r="12.4" fill="none"/><circle cx="49.5" cy="24.6" r="8.3" fill="none"/><circle cx="49.5" cy="24.6" r="4.2" fill="none"/><circle cx="80.7" cy="24.6" r="17.1" fill="#fff" stroke="none"/><circle cx="80.7" cy="24.6" r="16.4" fill="none"/><circle cx="80.7" cy="24.6" r="12.4" fill="none"/><circle cx="80.7" cy="24.6" r="8.3" fill="none"/><circle cx="80.7" cy="24.6" r="4.2" fill="none"/><circle cx="111.9" cy="24.6" r="17.1" fill="#fff" stroke="none"/><circle cx="111.9" cy="24.6" r="16.4" fill="none"/><circle cx="111.9" cy="24.6" r="12.4" fill="none"/><circle cx="111.9" cy="24.6" r="8.3" fill="none"/><circle cx="111.9" cy="24.6" r="4.2" fill="none"/><circle cx="143.1" cy="24.6" r="17.1" fill="#fff" stroke="none"/><circle cx="143.1" cy="24.6" r="16.4" fill="none"/><circle cx="143.1" cy="24.6" r="12.4" fill="none"/><circle cx="143.1" cy="24.6" r="8.3" fill="none"/><circle cx="143.1" cy="24.6" r="4.2" fill="none"/><circle cx="174.3" cy="24.6" r="17.1" fill="#fff" stroke="none"/><circle cx="174.3" cy="24.6" r="16.4" fill="none"/><circle cx="174.3" cy="24.6" r="12.4" fill="none"/><circle cx="174.3" cy="24.6" r="8.3" fill="none"/><circle cx="174.3" cy="24.6" r="4.2" fill="none"/><circle cx="205.5" cy="24.6" r="17.1" fill="#fff" stroke="none"/><circle cx="205.5" cy="24.6" r="16.4" fill="none"/><circle cx="205.5" cy="24.6" r="12.4" fill="none"/><circle cx="205.5" cy="24.6" r="8.3" fill="none"/><circle cx="205.5" cy="24.6" r="4.2" fill="none"/><circle cx="-28.5" cy="32.8" r="17.1" fill="#fff" stroke="none"/><circle cx="-28.5" cy="32.8" r="16.4" fill="none"/><circle cx="-28.5" cy="32.8" r="12.4" fill="none"/><circle cx="-28.5" cy="32.8" r="8.3" fill="none"/><circle cx="-28.5" cy="32.8" r="4.2" fill="none"/><circle cx="2.7" cy="32.8" r="17.1" fill="#fff" stroke="none"/><circle cx="2.7" cy="32.8" r="16.4" fill="none"/><circle cx="2.7" cy="32.8" r="12.4" fill="none"/><circle cx="2.7" cy="32.8" r="8.3" fill="none"/><circle cx="2.7" cy="32.8" r="4.2" fill="none"/><circle cx="33.9" cy="32.8" r="17.1" fill="#fff" stroke="none"/><circle cx="33.9" cy="32.8" r="16.4" fill="none"/><circle cx="33.9" cy="32.8" r="12.4" fill="none"/><circle cx="33.9" cy="32.8" r="8.3" fill="none"/><circle cx="33.9" cy="32.8" r="4.2" fill="none"/><circle cx="65.1" cy="32.8" r="17.1" fill="#fff" stroke="none"/><circle cx="65.1" cy="32.8" r="16.4" fill="none"/><circle cx="65.1" cy="32.8" r="12.4" fill="none"/><circle cx="65.1" cy="32.8" r="8.3" fill="none"/><circle cx="65.1" cy="32.8" r="4.2" fill="none"/><circle cx="96.3" cy="32.8" r="17.1" fill="#fff" stroke="none"/><circle cx="96.3" cy="32.8" r="16.4" fill="none"/><circle cx="96.3" cy="32.8" r="12.4" fill="none"/><circle cx="96.3" cy="32.8" r="8.3" fill="none"/><circle cx="96.3" cy="32.8" r="4.2" fill="none"/><circle cx="127.5" cy="32.8" r="17.1" fill="#fff" stroke="none"/><circle cx="127.5" cy="32.8" r="16.4" fill="none"/><circle cx="127.5" cy="32.8" r="12.4" fill="none"/><circle cx="127.5" cy="32.8" r="8.3" fill="none"/><circle cx="127.5" cy="32.8" r="4.2" fill="none"/><circle cx="158.7" cy="32.8" r="17.1" fill="#fff" stroke="none"/><circle cx="158.7" cy="32.8" r="16.4" fill="none"/><circle cx="158.7" cy="32.8" r="12.4" fill="none"/><circle cx="158.7" cy="32.8" r="8.3" fill="none"/><circle cx="158.7" cy="32.8" r="4.2" fill="none"/><circle cx="189.9" cy="32.8" r="17.1" fill="#fff" stroke="none"/><circle cx="189.9" cy="32.8" r="16.4" fill="none"/><circle cx="189.9" cy="32.8" r="12.4" fill="none"/><circle cx="189.9" cy="32.8" r="8.3" fill="none"/><circle cx="189.9" cy="32.8" r="4.2" fill="none"/></svg></g></svg>
<div class="t med" style="left:396.0px;top:277.4px;font-size:14.98px;color:#222;letter-spacing:-0.423px">YET TO PROCESS</div>
<div class="a" style="left:614px;top:232px;width:1px;height:78px;background:#eeeeee;"></div>
<div class="t " style="left:675.0px;top:239.0px;font-size:15.81px;color:#555;letter-spacing:-0.377px">PAYMENT DATE</div>
<div class="t med" style="left:675.0px;top:270.4px;font-size:20.28px;color:#222;letter-spacing:0.199px">31/03/2025</div>
<div class="t " style="left:863.0px;top:239.0px;font-size:15.81px;color:#555;letter-spacing:-0.621px">NO. OF EMPLOYEES</div>
<div class="t med" style="left:863.0px;top:270.4px;font-size:20.28px;color:#222;letter-spacing:-0.445px">6</div>
<svg class="a" style="left:369px;top:329px" width="19" height="19" viewBox="0 0 19 19"><circle cx="9.3" cy="9.2" r="9" fill="#999"/><text x="9.6" y="15.2" text-anchor="middle" font-family="Liberation Serif" font-weight="700" font-style="italic" font-size="15" fill="#fff">i</text></svg>
<div class="t " style="left:396.0px;top:328.7px;font-size:18.51px;color:#555;letter-spacing:0.023px">You haven't processed this pay run and it's past the pay day.</div>
<div class="a" style="left:1988px;top:231px;width:170px;height:53px;background:#558bf0;border-radius:10px;"></div>
<div class="t med" style="left:2005.7px;top:246.9px;font-size:19.66px;color:#fff;letter-spacing:-0.407px">Create Pay Run</div>
<div class="t med" style="left:334.0px;top:431.8px;font-size:24.65px;color:#222;letter-spacing:-0.506px">Employee Summary</div>
<div class="a" style="left:333px;top:476px;width:909px;height:397px;background:#fff;border-radius:4px;box-shadow:0 4px 40px rgba(30,30,70,0.05);border:1px solid #f0f2fb;box-sizing:border-box;"></div>
<div class="t " style="left:497.7px;top:574.8px;font-size:19.76px;color:#222;letter-spacing:-0.397px">Active Employees</div>
<div class="t " style="left:551.5px;top:611.6px;font-size:81px;color:#222;-webkit-text-stroke:1.1px #222">7</div>
<div class="a" style="left:787px;top:525px;width:1px;height:229px;background:linear-gradient(#fff,#eeeeee 20%,#eeeeee 80%,#fff);"></div>
<div class="a" style="left:930px;top:543px;width:45px;height:144px;background:#7bcd9d;border-radius:6px;"></div>
<div class="a" style="left:912px;top:697.2px;width:80px;text-align:center;font-size:12.7px;line-height:12px;letter-spacing:0.38px;color:#222" ><span class="med">GCC<br>NATIONALS</span></div>
<div class="a" style="left:1012px;top:697.2px;width:80px;text-align:center;font-size:12.7px;line-height:12px;letter-spacing:0.38px;color:#222" ><span class="med">EXPATS</span></div>
<div class="a" style="left:362px;top:802px;width:856px;height:1px;background:linear-gradient(90deg,rgba(230,230,235,0),#e8e8ee 10%,#e8e8ee 90%,rgba(230,230,235,0));"></div>
<div class="t " style="left:716.7px;top:829.3px;font-size:19.76px;color:#3568d4;letter-spacing:-0.221px">View Employees</div>
<div class="t med" style="left:1283.4px;top:431.8px;font-size:24.65px;color:#222;letter-spacing:-0.287px">Social Security Summary</div>
<div class="t " style="left:2102.0px;top:436.4px;font-size:18.93px;color:#4a5578;letter-spacing:-0.324px">This Year</div>
<svg class="a" style="left:2182px;top:444px" width="10" height="5"><path d="M0 0 H10 L5 5 Z" fill="#4a5578"/></svg>
<div class="a" style="left:1283px;top:476px;width:909px;height:397px;background:#fff;border-radius:4px;box-shadow:0 4px 40px rgba(30,30,70,0.05);border:1px solid #f0f2fb;box-sizing:border-box;"></div>
<div class="a" style="left:1300px;top:503px;width:880px;height:360px;overflow:hidden">
<div class="a" style="left:13.5px;top:-8px;width:848px;height:100px;border:1.3px solid #ebebeb;border-radius:7px;box-sizing:border-box"></div>
<div class="a" style="left:42px;top:12px;width:55px;height:57px;border:1px solid #ececec;background:#f8f8f8;border-radius:7px;box-sizing:border-box"></div>
<div class="a" style="left:13.5px;top:112px;width:848px;height:100px;border:1.3px solid #ebebeb;border-radius:7px;box-sizing:border-box"></div>
<div class="a" style="left:42px;top:132px;width:55px;height:57px;border:1px solid #ececec;background:#f8f8f8;border-radius:7px;box-sizing:border-box"></div>
<div class="a" style="left:13.5px;top:232px;width:848px;height:100px;border:1.3px solid #ebebeb;border-radius:7px;box-sizing:border-box"></div>
<div class="a" style="left:42px;top:252px;width:55px;height:57px;border:1px solid #ececec;background:#f8f8f8;border-radius:7px;box-sizing:border-box"></div>
</div>
<div class="t " style="left:1435.0px;top:519.7px;font-size:16.12px;color:#222;letter-spacing:-0.345px">SIO</div>
<div class="t semi" style="left:1435.0px;top:549.2px;font-size:18.93px;color:#111;letter-spacing:0.317px">BHD15,875.000</div>
<div class="t " style="left:1435.0px;top:639.7px;font-size:16.12px;color:#222;letter-spacing:-0.347px">PIFSS</div>
<div class="t semi" style="left:1435.0px;top:669.2px;font-size:18.93px;color:#111;letter-spacing:0.317px">BHD10,650.000</div>
<div class="t " style="left:1435.0px;top:759.7px;font-size:16.12px;color:#222;letter-spacing:-0.373px">GRSIA</div>
<div class="t semi" style="left:1435.0px;top:789.2px;font-size:18.93px;color:#111;letter-spacing:0.299px">BHD420.000</div>
<svg class="a" style="left:1355px;top:529px" width="30" height="32" viewBox="0 0 30 32"><path d="M3 5 C1 10 3 17 7 23 C9 27 12 30 14.5 31 C17 30 20 27 22 23 C26 17 28 10 27 5 Z" fill="#fff"/><g fill="none" stroke-linecap="butt"><path d="M2.8 4.5 C1.2 9.5 3.5 16.5 7 22.5 C9 26.5 11.5 29.5 14 31" stroke="#d23a34" stroke-width="2.4" stroke-dasharray="2.2 2"/><path d="M27 4 C28.8 9.5 26.5 16.5 23 22.5 C21 26.5 18.5 29.5 16 31" stroke="#d23a34" stroke-width="2.4" stroke-dasharray="2.2 2"/><path d="M2.5 6 C5 5 8 8 11 7.5 M18 7.5 C21 8 25 6 28 7" stroke="#c9c9c9" stroke-width="1.4"/><path d="M3.2 10 C4 15 6 19 8 22 M26.8 10 C26 15 24 19 22 22" stroke="#cfcfcf" stroke-width="1"/></g><circle cx="26" cy="4.5" r="2.6" fill="#d23a34"/><circle cx="4" cy="4" r="1.8" fill="#d23a34"/><path d="M10 8.6 L10.4 3 L12 5.5 L13.5 2.5 L14.6 5.2 L16 2.5 L17.4 5.5 L19 3 L19.4 8.6 Z" fill="#d9a441"/><path d="M7.4 8.8 H21.6 V14.6 C21.2 19.6 18.4 23.4 14.5 25.8 C10.6 23.4 7.8 19.6 7.4 14.6 Z" fill="#fff"/><path d="M7.6 15.6 L8.7 12.4 L10 15 L11.5 12.4 L12.8 15 L14.3 12.4 L15.6 15 L17.1 12.4 L18.4 15 L19.9 12.4 L21.4 15.6 C21.1 20 18.4 23.6 14.5 25.8 C10.6 23.6 7.9 20 7.6 15.6 Z" fill="#e2322a"/></svg>
<svg class="a" style="left:1355px;top:651px" width="28" height="27" viewBox="0 0 28 27"><rect x="1" y="1" width="26.8" height="25.8" fill="#fff"/><g fill="#2f57a0"><rect x="1.4" y="14.9" width="1.7" height="9.1"/><rect x="4.0" y="19.9" width="1.8" height="4.1"/><rect x="6.2" y="1.8" width="1.9" height="22.2"/><rect x="9.0" y="17.0" width="1.6" height="7.2"/><rect x="11.2" y="18.0" width="1.6" height="6.0"/><rect x="14.0" y="20.2" width="2.8" height="3.8"/><rect x="18.2" y="9.9" width="1.8" height="14.1"/><rect x="20.6" y="15.2" width="1.4" height="8.8"/><rect x="23.2" y="12.4" width="1.8" height="11.6"/><rect x="25.9" y="15.2" width="1.5" height="8.8"/></g><path d="M9 22.5 C10 25 12 25.5 13 23.5" stroke="#2f57a0" stroke-width="1" fill="none"/></svg>
<svg class="a" style="left:1355px;top:765px" width="28" height="31" viewBox="0 0 28 31"><rect x="1" y="10" width="26.7" height="20" fill="#fff"/><g fill="none" stroke-width="1.15" stroke-linecap="round"><path d="M1.2 27.8 Q7 20 15.3 17.5" stroke="#3f7d55"/><path d="M11.2 28.4 C12.6 26.2 13.8 24.8 11.2 23.4 C10.2 22.5 12.5 19.6 15.3 17.8" stroke="#7fae90"/><path d="M13.4 21.5 C17 21 23 18 27.4 12.2" stroke="#8a3a5e"/><path d="M17.5 10.9 C16 12.5 15 14 17.5 15.8 C18.5 17 16 19.5 13.7 21.5" stroke="#b07792"/></g></svg>
<div class="t med" style="left:334.0px;top:928.1px;font-size:24.65px;color:#222;letter-spacing:-0.448px">Payroll Cost Summary</div>
<div class="t " style="left:2102.0px;top:928.5px;font-size:18.93px;color:#4a5578;letter-spacing:-0.324px">This Year</div>
<svg class="a" style="left:2182px;top:936px" width="10" height="5"><path d="M0 0 H10 L5 5 Z" fill="#4a5578"/></svg>
<div class="a" style="left:333px;top:971px;width:1858px;height:433px;background:#fff;border-radius:4px;box-shadow:0 4px 40px rgba(30,30,70,0.05);border:1px solid #f0f2fb;box-sizing:border-box;"></div>
<svg class="a" style="left:0;top:0" width="2880" height="1434"><line x1="790" y1="1075.9" x2="1783" y2="1075.9" stroke="#dcdcdc" stroke-width="1.6" stroke-dasharray="6.6 6.7"/><line x1="790" y1="1134.8" x2="1783" y2="1134.8" stroke="#dcdcdc" stroke-width="1.6" stroke-dasharray="6.6 6.7"/><line x1="790" y1="1194.4" x2="1783" y2="1194.4" stroke="#dcdcdc" stroke-width="1.6" stroke-dasharray="6.6 6.7"/><line x1="790" y1="1253.4" x2="1783" y2="1253.4" stroke="#dcdcdc" stroke-width="1.6" stroke-dasharray="6.6 6.7"/><line x1="790" y1="1312.9" x2="1783" y2="1312.9" stroke="#dcdcdc" stroke-width="1.6" stroke-dasharray="6.6 6.7"/><rect x="835.6" y="1066" width="14.4" height="246.5" fill="#5bbf87"/><rect x="835.6" y="1025.7" width="14.4" height="40.3" fill="#7a9cf5"/><rect x="917" y="1193.3" width="14.6" height="119.2" fill="#5bbf87"/><rect x="917" y="1148.4" width="14.6" height="44.9" fill="#7a9cf5"/><rect x="917" y="1147.3" width="14.6" height="1.1" fill="#f08a8a"/></svg>
<div class="a" style="left:700px;top:1067.3px;width:76px;text-align:right;font-size:17.3px;line-height:1;color:#555">80 K</div>
<div class="a" style="left:700px;top:1126.2px;width:76px;text-align:right;font-size:17.3px;line-height:1;color:#555">60 K</div>
<div class="a" style="left:700px;top:1185.8px;width:76px;text-align:right;font-size:17.3px;line-height:1;color:#555">40 K</div>
<div class="a" style="left:700px;top:1244.8px;width:76px;text-align:right;font-size:17.3px;line-height:1;color:#555">20 K</div>
<div class="a" style="left:700px;top:1304.3px;width:76px;text-align:right;font-size:17.3px;line-height:1;color:#555">0</div>
<div class="a" style="left:803.0px;top:1324.0px;width:80px;text-align:center;font-size:15.2px;line-height:15px;letter-spacing:1.05px;color:#555">Jan<br>2025</div>
<div class="a" style="left:884.4px;top:1324.0px;width:80px;text-align:center;font-size:15.2px;line-height:15px;letter-spacing:1.05px;color:#555">Feb<br>2025</div>
<div class="a" style="left:965.7px;top:1324.0px;width:80px;text-align:center;font-size:15.2px;line-height:15px;letter-spacing:1.05px;color:#555">Mar<br>2025</div>
<div class="a" style="left:1047.0px;top:1324.0px;width:80px;text-align:center;font-size:15.2px;line-height:15px;letter-spacing:1.05px;color:#555">Apr<br>2025</div>
<div class="a" style="left:1128.4px;top:1324.0px;width:80px;text-align:center;font-size:15.2px;line-height:15px;letter-spacing:1.05px;color:#555">May<br>2025</div>
<div class="a" style="left:1209.8px;top:1324.0px;width:80px;text-align:center;font-size:15.2px;line-height:15px;letter-spacing:1.05px;color:#555">Jun<br>2025</div>
<div class="a" style="left:1291.1px;top:1324.0px;width:80px;text-align:center;font-size:15.2px;line-height:15px;letter-spacing:1.05px;color:#555">Jul<br>2025</div>
<div class="a" style="left:1372.4px;top:1324.0px;width:80px;text-align:center;font-size:15.2px;line-height:15px;letter-spacing:1.05px;color:#555">Aug<br>2025</div>
<div class="a" style="left:1453.8px;top:1324.0px;width:80px;text-align:center;font-size:15.2px;line-height:15px;letter-spacing:1.05px;color:#555">Sep<br>2025</div>
<div class="a" style="left:1535.2px;top:1324.0px;width:80px;text-align:center;font-size:15.2px;line-height:15px;letter-spacing:1.05px;color:#555">Oct<br>2025</div>
<div class="a" style="left:1616.5px;top:1324.0px;width:80px;text-align:center;font-size:15.2px;line-height:15px;letter-spacing:1.05px;color:#555">Nov<br>2025</div>
<div class="a" style="left:1697.8px;top:1324.0px;width:80px;text-align:center;font-size:15.2px;line-height:15px;letter-spacing:1.05px;color:#555">Dec<br>2025</div>
</body></html>
